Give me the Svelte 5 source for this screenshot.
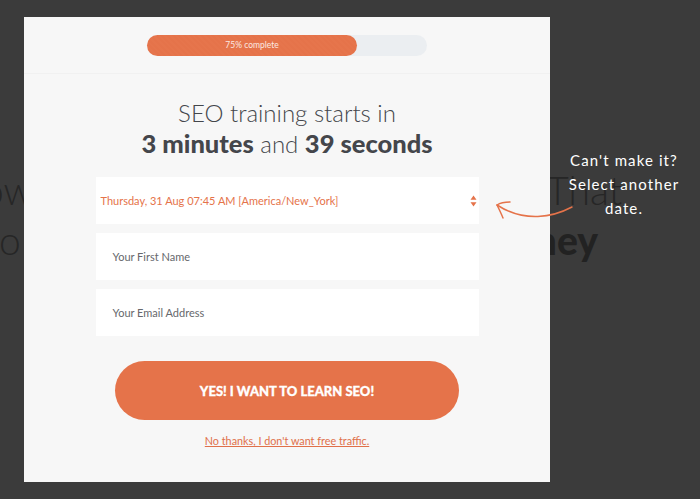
<script>
    let percent = 75;
    let minutes = 3;
    let seconds = 39;
</script>

<div class="page">
    <div class="behind">
        <p class="line one"><span>ow</span><span>That</span></p>
        <p class="line two"><span>o</span><b>ney</b></p>
    </div>

    <div class="modal">
        <div class="top">
            <div class="track">
                <div class="fill" style="width: {percent}%;">{percent}% complete</div>
            </div>
        </div>

        <h1>SEO training starts in<br><b>{minutes} minutes</b> and <b>{seconds} seconds</b></h1>

        <div class="fields">
            <div class="field select">
                <span>Thursday, 31 Aug 07:45 AM [America/New_York]</span>
                <svg width="7" height="12" viewBox="0 0 7 12">
                    <path d="M3.5 0.5 L6.5 4.8 L0.5 4.8 Z M3.5 11.5 L6.5 7.2 L0.5 7.2 Z" fill="#e5734a"/>
                </svg>
            </div>
            <div class="field">Your First Name</div>
            <div class="field">Your Email Address</div>
        </div>

        <button>YES! I WANT TO LEARN SEO!</button>
        <a href="#top">No thanks, I don't want free traffic.</a>
    </div>

    <div class="note">Can't make it?<br>Select another<br>date.</div>

    <svg class="arrow" width="90" height="30" viewBox="0 0 90 30">
        <g fill="none" stroke="#e5734a" stroke-width="1.5" stroke-linecap="round">
            <path d="M85 17 C66 27 38 33 10 15"/>
            <path d="M23 12 C18 12 13 13 10 15 C12 19 14 23 16 28"/>
        </g>
    </svg>
</div>

<style>
    :global(body) {
        margin: 0;
        background: #3b3b3b;
    }

    .page {
        position: relative;
        width: 700px;
        height: 499px;
        overflow: hidden;
        padding: 17px 0 0 24px;
        box-sizing: border-box;
        font-family: Lato, "Liberation Sans", sans-serif;
    }

    .behind {
        position: absolute;
        top: 165px;
        left: 0;
        width: 700px;
        color: #262626;
        font-size: 39px;
        line-height: 50px;
        font-weight: 300;
    }

    .line {
        display: flex;
        justify-content: space-between;
        margin: 0;
    }

    .one {
        padding: 0 78px 0 0;
        margin-left: -18px;
    }

    .two {
        padding: 0 102px 0 0;
        margin-left: -1px;
    }

    .two b {
        font-weight: 900;
        color: #222;
    }

    .modal {
        position: relative;
        width: 526px;
        height: 465px;
        background: #f7f7f7;
        display: flex;
        flex-direction: column;
        align-items: center;
    }

    .top {
        width: 100%;
        height: 57px;
        padding-top: 18px;
        box-sizing: border-box;
        border-bottom: 1px solid #f1f1f1;
        display: flex;
        justify-content: center;
    }

    .track {
        width: 280px;
        height: 21px;
        background: #ebeef1;
        border-radius: 11px;
    }

    .fill {
        height: 100%;
        border-radius: 11px;
        background: repeating-linear-gradient(45deg, #e5734a 0 2px, #e6754c 2px 4px);
        color: #fbe9e2;
        font-size: 8.5px;
        line-height: 21px;
        text-align: center;
    }

    h1 {
        margin: 24px 0 0;
        color: #44464b;
        font-size: 24px;
        line-height: 30px;
        font-weight: 300;
        text-align: center;
    }

    h1 b {
        font-size: 25.5px;
        font-weight: 900;
    }

    .fields {
        width: 383px;
        margin-top: 18px;
        display: flex;
        flex-direction: column;
        gap: 9px;
    }

    .field {
        height: 47px;
        padding-left: 17px;
        background: #fff;
        color: #66686c;
        font-size: 11px;
        display: flex;
        align-items: center;
        justify-content: space-between;
    }

    .select {
        padding: 0 2px 0 5px;
        color: #e5734a;
        font-size: 11px;
    }

    button {
        width: 344px;
        height: 59px;
        margin-top: 25px;
        border: none;
        border-radius: 30px;
        background: #e5734a;
        color: #fff;
        font-family: inherit;
        font-size: 13px;
        font-weight: 900;
        -webkit-text-stroke: 0.3px #fff;
    }

    a {
        margin-top: 14px;
        color: #e0704a;
        font-size: 10.8px;
    }

    .note {
        position: absolute;
        top: 148px;
        left: 549px;
        width: 150px;
        color: #fff;
        font-size: 15px;
        line-height: 24px;
        letter-spacing: 1.1px;
        text-align: center;
    }

    .arrow {
        position: absolute;
        top: 190px;
        left: 487px;
    }
</style>
